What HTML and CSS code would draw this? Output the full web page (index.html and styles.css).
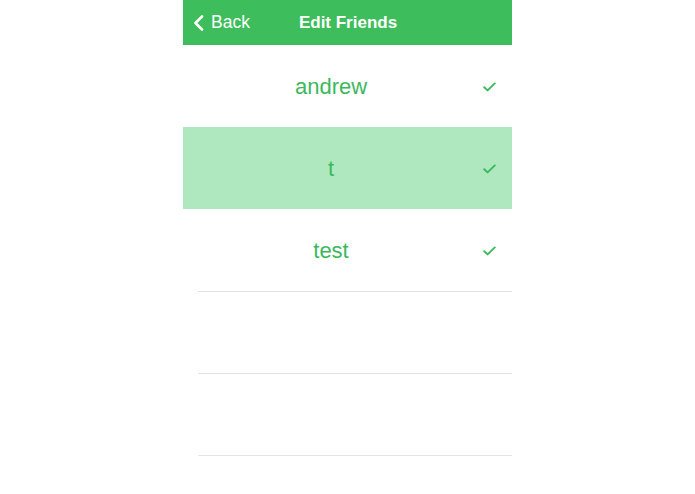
FILE: index.html
```html
<!DOCTYPE html>
<html lang="en">
<head>
  <meta charset="UTF-8" />
  <meta name="viewport" content="width=device-width, initial-scale=1.0"/>
  <title>Edit Friends</title>
  <link rel="stylesheet" href="styles.css">
</head>
<body>
	<div class="screen">
		<div class="nav-bar">
			<a class="back" href="#">
				<svg class="chevron" width="11" height="16" viewBox="0 0 11 16">
					<path d="M9 1.5 L2.5 8 L9 14.5" fill="none" stroke="#fff" stroke-width="2.6" stroke-linecap="round" stroke-linejoin="round"/>
				</svg>
				<span>Back</span>
			</a>
			<div class="nav-title">Edit Friends</div>
		</div>

		<ul class="friends">
			<li class="row hide-sep">
				<span class="name">andrew</span>
				<span class="accessory"><svg width="13" height="10" viewBox="0 0 13 10"><path d="M1.2 5.2 L4.6 8.4 L11.8 1.4" fill="none" stroke="#3cb85c" stroke-width="1.9" stroke-linecap="round" stroke-linejoin="round"/></svg></span>
			</li>
			<li class="row selected">
				<span class="name">t</span>
				<span class="accessory"><svg width="13" height="10" viewBox="0 0 13 10"><path d="M1.2 5.2 L4.6 8.4 L11.8 1.4" fill="none" stroke="#3cb85c" stroke-width="1.9" stroke-linecap="round" stroke-linejoin="round"/></svg></span>
			</li>
			<li class="row">
				<span class="name">test</span>
				<span class="accessory"><svg width="13" height="10" viewBox="0 0 13 10"><path d="M1.2 5.2 L4.6 8.4 L11.8 1.4" fill="none" stroke="#3cb85c" stroke-width="1.9" stroke-linecap="round" stroke-linejoin="round"/></svg></span>
			</li>
			<li class="row empty"></li>
			<li class="row empty"></li>
			<li class="row empty"></li>
		</ul>
	</div>
</body>
</html>
```

FILE: styles.css
```css
html, body {
  height: 100%;
}

body {
  margin: 0;
  font-family: "Liberation Sans", Arial, sans-serif;
  background: #fff;
  overflow: hidden;
}

.screen {
  width: 329px;
  height: 100%;
  margin: 0 auto;
  overflow: hidden;
}

.nav-bar {
  display: flex;
  align-items: center;
  height: 45px;
  background: #3dbd5b;
  color: #fff;
}

.back {
  display: flex;
  align-items: center;
  padding-left: 10px;
  color: #fff;
  text-decoration: none;
  font-size: 17.5px;
}

.back span {
  margin-left: 7px;
}

.chevron {
  display: block;
}

.nav-title {
  margin-left: 49px;
  padding-top: 1px;
  font-size: 17px;
  font-weight: bold;
}

.friends {
  list-style: none;
  margin: 0;
  padding: 0;
}

.row {
  position: relative;
  display: flex;
  align-items: center;
  height: 82px;
}

.row::after {
  content: "";
  position: absolute;
  left: 15px;
  right: 0;
  bottom: -1px;
  height: 1px;
  background: #e2e2e2;
}

.row.hide-sep::after,
.row.selected::after {
  display: none;
}

.row.selected {
  background: #afe8bf;
}

.name {
  flex: 1;
  text-align: center;
  font-size: 22px;
  color: #3cb85c;
  padding-top: 2px;
}

.accessory {
  box-sizing: border-box;
  width: 33px;
  padding-left: 4px;
  padding-top: 2px;
  display: flex;
}

.accessory svg {
  display: block;
}
```
